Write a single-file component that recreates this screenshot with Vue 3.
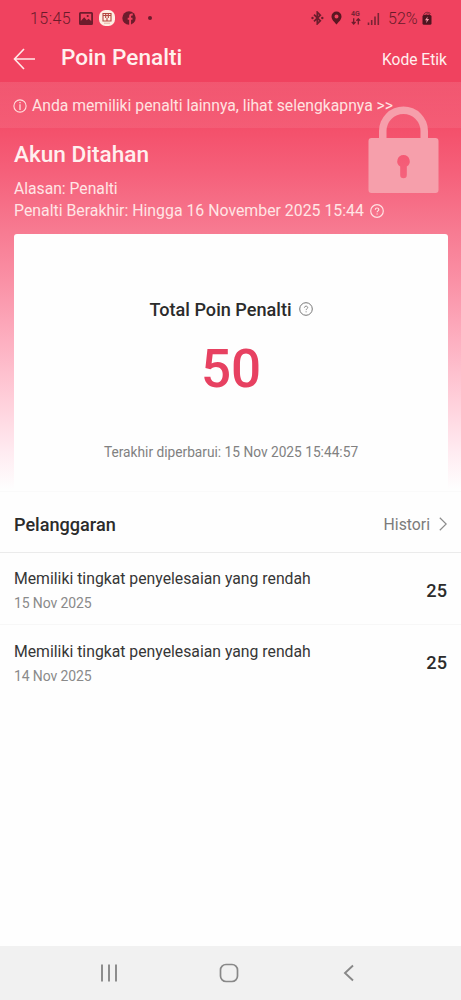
<script setup>
const violations = [
  { title: 'Memiliki tingkat penyelesaian yang rendah', date: '15 Nov 2025', points: 25 },
  { title: 'Memiliki tingkat penyelesaian yang rendah', date: '14 Nov 2025', points: 25 },
]
</script>

<template>
  <div class="screen">
    <header class="top">
      <div class="status">
        <div class="status-left">
          <span class="clock">15:45</span>
          <svg class="s-image" width="14" height="13" viewBox="0 0 14 13">
            <path fill="#6d1c2c" fill-rule="evenodd" d="M1.5 0h11A1.5 1.5 0 0 1 14 1.5v10a1.5 1.5 0 0 1-1.5 1.5h-11A1.5 1.5 0 0 1 0 11.500v-10A1.500 1.500 0 0 1 1.500 0zM1.800 1.700v7.300l3.400-3.700 2.600 2.900 1.700-1.500 2.700 2.400V1.700z" />
            <circle cx="8.700" cy="4" r="1.100" fill="#6d1c2c" />
          </svg>
          <svg class="s-shop" width="16" height="16" viewBox="0 0 16 16">
            <rect width="16" height="16" rx="6.500" fill="#fdeee3" />
            <path d="M4 3.500h8v7.500H4zM4 5.500h8M6.700 4v4M9.300 4v4M8 8v2.500" fill="none" stroke="#b3463f" stroke-width="1.100" />
            <path d="M5 13.200h6" stroke="#e2a294" stroke-width=".8" />
          </svg>
          <svg class="s-face" width="14" height="14" viewBox="0 0 14 14">
            <circle cx="7" cy="7" r="6.700" fill="#6d1c2c" />
            <path d="M10.800 3.500H9.800c-1.300 0-1.700.8-1.700 1.800V14M5.700 7.700h4.800" fill="none" stroke="#f0425f" stroke-width="1.900" />
          </svg>
          <i class="dot"></i>
        </div>
        <div class="status-right">
          <svg width="13" height="14" viewBox="0 0 13 14">
            <path d="M3 3.700l6.300 6.100-3 3V1.200l3 3L3 10.300" fill="none" stroke="#6d1c2c" stroke-width="1.700" />
            <circle cx="1.500" cy="7" r="1.200" fill="#6d1c2c" /><circle cx="11.300" cy="7" r="1.200" fill="#6d1c2c" />
          </svg>
          <svg class="s-pin" width="11" height="14" viewBox="0 0 11 14">
            <path fill="#591722" fill-rule="evenodd" d="M5.500.5a5 5 0 0 1 5 5c0 3.300-3.300 5.800-5 8-1.700-2.200-5-4.700-5-8a5 5 0 0 1 5-5zm0 3a2 2 0 1 0 0 4 2 2 0 0 0 0-4z" />
          </svg>
          <span class="network"><b>4G</b>
            <svg width="10" height="7" viewBox="0 0 10 7"><path d="M2.700.3v5M.8 3.800l1.900 2.200 1.900-2.200M7.300 6.500V1M5.400 2.700L7.300.8l1.900 1.900" fill="none" stroke="#6d1c2c" stroke-width="1.300" /></svg>
          </span>
          <svg class="s-signal" width="13" height="13" viewBox="0 0 13 13">
            <path d="M1.500 13v-2.500M4.700 13V8M8 13V4.500M11.300 13V1" stroke="#7a2435" stroke-width="1.600" />
          </svg>
          <span class="percent">52%</span>
          <svg class="s-battery" width="10" height="14" viewBox="0 0 10 14">
            <path d="M1.500 4.500C2.500.7 6 .7 8.500 2.500M3 4.500c1.500-2 3-2 5-1" fill="none" stroke="#7a2435" />
            <rect x=".5" y="4" width="9" height="9.700" rx="1.500" fill="#4d1520" />
            <path d="M5.700 5.500L3 9.300h1.800l-.7 3 3-4.200H5.200z" fill="#f39aaa" />
          </svg>
        </div>
      </div>
      <div class="toolbar">
        <svg class="back" width="23" height="22" viewBox="0 0 23 22"><path d="M11 1L1.500 11 11 21M1.500 11H22" fill="none" stroke="#ffe9e9" stroke-width="1.600" /></svg>
        <h1>Poin Penalti</h1>
        <span class="code">Kode Etik</span>
      </div>
    </header>

    <section class="hero">
      <div class="notice">
        <svg width="14" height="14" viewBox="0 0 14 14"><circle cx="7" cy="7" r="6.100" fill="none" stroke="#ffdedd" stroke-width="1.100" /><path d="M7 3v1.300M7 5.300V11" stroke="#ffdedd" stroke-width="1.300" /></svg>
        <span>Anda memiliki penalti lainnya, lihat selengkapnya &gt;&gt;</span>
      </div>
      <svg class="lock" width="71" height="88" viewBox="0 0 71 88">
        <path fill="#f69fab" fill-rule="evenodd" d="M11 32V25a24.500 24.500 0 0 1 49 0v7h7.500a3 3 0 0 1 3 3v49a3 3 0 0 1-3 3h-64a3 3 0 0 1-3-3V35a3 3 0 0 1 3-3zM18.500 32h34V25a17 17 0 0 0-34 0zM35.500 49a6.300 6.300 0 0 0-3.300 11.600V69a3.300 3.300 0 0 0 6.600 0v-8.400A6.300 6.300 0 0 0 35.500 49z" />
      </svg>
      <div class="account">
        <h2>Akun Ditahan</h2>
        <p class="reason">Alasan: Penalti</p>
        <p class="ends"><span>Penalti Berakhir: Hingga 16 November 2025 15:44</span>
          <svg width="14" height="14" viewBox="0 0 14 14"><circle cx="7" cy="7" r="6.300" fill="none" stroke="#ffe1e3" stroke-width="1.200" /><path d="M5.300 5.700c0-2.300 3.500-2.200 3.500-.1 0 1.300-1.700 1.300-1.700 2.700M7.100 9.400v1.100" fill="none" stroke="#ffe1e3" stroke-width="1.200" /></svg>
        </p>
      </div>
      <div class="card">
        <div class="total"><span>Total Poin Penalti</span>
          <svg width="14" height="14" viewBox="0 0 14 14"><circle cx="7" cy="7" r="6.300" fill="none" stroke="#777" /><path d="M5.400 5.700c0-2.100 3.300-2 3.300-.1 0 1.200-1.600 1.200-1.600 2.500M7.100 9.300v1" fill="none" stroke="#888" /></svg>
        </div>
        <div class="score">50</div>
        <div class="updated"><span>Terakhir diperbarui: 15 Nov 2025 15:44:57</span></div>
      </div>
    </section>

    <main>
      <div class="list-head">
        <h3>Pelanggaran</h3>
        <span class="history">Histori</span>
        <svg width="8" height="14" viewBox="0 0 8 14"><path d="M.8.800L7.200 7 .8 13.200" fill="none" stroke="#8b8b8b" stroke-width="1.200" /></svg>
      </div>
      <div v-for="item in violations" :key="item.date" class="row">
        <div>
          <div class="title">{{ item.title }}</div>
          <div class="date">{{ item.date }}</div>
        </div>
        <span class="points">{{ item.points }}</span>
      </div>
    </main>

    <nav>
      <svg width="18" height="18" viewBox="0 0 18 18"><path d="M2 .5v17M9 .5v17M16 .5v17" stroke="#888" stroke-width="1.900" /></svg>
      <svg width="20" height="20" viewBox="0 0 20 20"><rect x="1.500" y="1.500" width="17" height="17" rx="5.500" fill="none" stroke="#888" stroke-width="1.700" /></svg>
      <svg width="12" height="18" viewBox="0 0 12 18"><path d="M10 1.500L2 9l8 7.500" fill="none" stroke="#888" stroke-width="1.900" /></svg>
    </nav>
  </div>
</template>

<style>
body { margin: 0; }
</style>

<style scoped>
.screen { width: 461px; height: 1000px; display: flex; flex-direction: column; overflow: hidden; background: #fefefe; font-family: Roboto, "Liberation Sans", sans-serif; color: #2b2b2b; }
h1, h2, h3, p { margin: 0; font-weight: 500; }
svg { display: block; flex: none; }
span, h1, h2, h3, .title, .date { white-space: nowrap; }
.top { height: 82px; background: #f0425f; flex: none; }
.status { height: 36px; display: flex; justify-content: space-between; align-items: center; padding: 0 28px 0 30px; box-sizing: border-box; color: #7b2335; }
.status-left, .status-right { display: flex; align-items: center; }
.clock { font-size: 16px; font-weight: 300; width: 49px; letter-spacing: .45px; color: #691b2a; }
.s-shop { margin-left: 6px; }
.s-face { margin-left: 7px; }
.dot { width: 4px; height: 4px; border-radius: 2px; background: #6d1c2c; margin-left: 12px; }
.s-pin { margin-left: 7px; }
.network { margin-left: 9px; width: 10px; height: 14px; }
.network b { display: block; font-size: 7px; line-height: 7px; }
.s-signal { margin-left: 6px; }
.percent { margin-left: 8px; font-size: 16px; font-weight: 300; width: 30px; color: #691b2a; }
.s-battery { margin-left: 4px; margin-right: 1px; }
.toolbar { height: 46px; display: flex; align-items: center; padding: 0 14px 0 13px; color: #fff0ee; }
.toolbar h1 { margin-left: 25px; font-size: 22.600px; line-height: 28px; flex: 1; margin-top: -2px; }
.code { font-size: 15.600px; margin-top: 1px; }
.hero { position: relative; height: 409px; flex: none; background: linear-gradient(#f0425f 0, #f4516c 50px, #f5607a 90px, #f77b92 150px, #fa91a6 200px, #fdb0c1 260px, #ffd0db 320px, #ffebf1 370px, #fefefe 407px); }
.notice { height: 46px; box-sizing: border-box; display: flex; align-items: center; padding: 1px 13px 0; gap: 5px; font-size: 15.720px; color: #ffe3e1; background: linear-gradient(rgba(255,255,255,.11), rgba(255,255,255,.07)); }
.lock { position: absolute; left: 368px; top: 24px; }
.account { position: relative; height: 106px; padding: 12px 14px 0; box-sizing: border-box; color: #fff0ef; }
.account h2 { font-size: 22.600px; line-height: 30px; }
.account p { font-size: 15.850px; line-height: 22px; font-weight: 400; color: #ffe5e5; }
.account .reason { margin-top: 8px; font-size: 15.700px; }
.ends { display: flex; align-items: center; gap: 6px; }
.ends svg { margin-top: -1px; }
.card { margin: 0 13px 0 14px; height: 257px; border-radius: 3px 3px 0 0; background: #fefefe; display: flex; flex-direction: column; align-items: center; }
.total { margin-top: 63px; height: 24px; display: flex; align-items: center; gap: 7px; font-size: 18.100px; font-weight: 500; }
.score { margin-top: 18px; height: 60px; line-height: 60px; font-size: 53px; font-weight: 500; color: #e74161; }
.updated { margin-top: 43px; line-height: 20px; font-size: 13.730px; color: #818181; }
.list-head { height: 62px; border-bottom: 1px solid #ebebeb; border-top: 1px solid #fafafa; box-sizing: border-box; display: flex; align-items: center; padding: 5px 14px 0; }
.list-head h3 { flex: 1; font-size: 18.100px; }
.list-head svg { margin-top: -2px; }
.history { font-size: 15.800px; color: #7b7b7b; margin-right: 9px; }
.row { height: 72px; box-sizing: border-box; border-bottom: 1px solid #f7f7f7; display: flex; justify-content: space-between; align-items: center; padding: 4px 14px 0; }
.row + .row { padding-top: 5px; }
.row:last-child { border-color: transparent; }
.title { font-size: 15.780px; line-height: 22px; color: #363636; }
.date { font-size: 14px; letter-spacing: -.13px; line-height: 20px; color: #8a8a8a; margin-top: 3px; }
.points { font-size: 18.200px; font-weight: 500; margin-top: -1px; }
nav { margin-top: auto; height: 54px; background: #f1f1f1; display: flex; align-items: center; padding-left: 100px; }
nav svg:nth-child(2) { margin-left: 101px; }
nav svg:nth-child(3) { margin-left: 104px; }
</style>
